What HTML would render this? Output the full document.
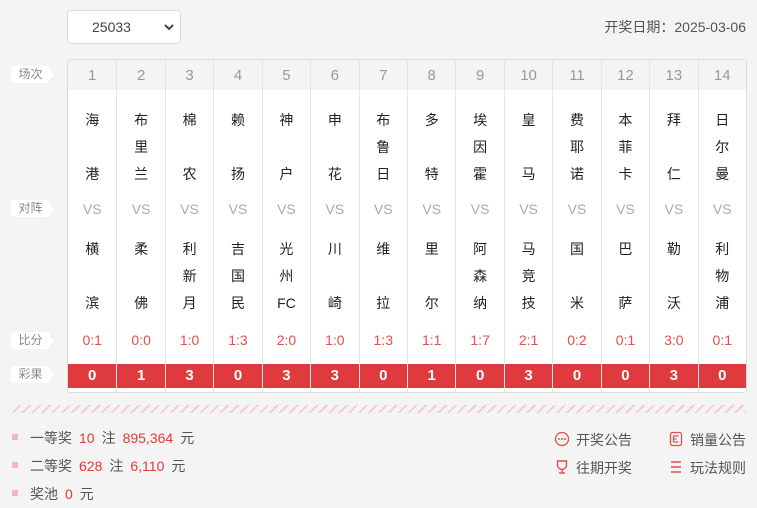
<!DOCTYPE html>
<html><head><meta charset="utf-8"><style>
*{margin:0;padding:0;box-sizing:border-box}
body{width:757px;height:508px;background:#f4f4f4;font-family:"Liberation Sans","Noto Sans CJK SC",sans-serif;position:relative;overflow:hidden;color:#333}
.sel{position:absolute;left:67px;top:10px;width:114px;height:34px;background:#fff;border:1px solid #ddd;border-radius:4px;font-size:14px;color:#444;line-height:32px;padding-left:24px}
.sel svg{position:absolute;right:6px;top:13px}
.date{position:absolute;right:11px;top:17px;font-size:14px;color:#555}
.lab{position:absolute;left:11px;width:39px;height:17px;background:#fff;border-radius:4px;font-size:12px;color:#888;text-align:center;line-height:17px}
.lab:after{content:"";position:absolute;right:-4px;top:5px;border-left:4px solid #fff;border-top:4px solid transparent;border-bottom:4px solid transparent}
.tbl{position:absolute;left:67px;top:59px;width:680px;height:334px;border:1px solid #ddd;border-radius:3px;background:#fff;display:grid;grid-template-columns:repeat(14,1fr);overflow:hidden}
.col{position:relative;border-left:1px solid #e6e6e6;height:100%}
.col:first-child{border-left:none}
.hd{height:30px;background:#f4f4f4;text-align:center;line-height:32px;font-size:15px;color:#999}
.t{position:absolute;left:0;right:0;display:flex;flex-direction:column;justify-content:space-between;align-items:center;font-size:14px;color:#222;line-height:20px}
.h{top:50px;height:74px}
.a{top:179px;height:74px}
.vs{position:absolute;top:141px;width:100%;text-align:center;font-size:14px;color:#aaa}
.sc{position:absolute;top:272px;width:100%;text-align:center;font-size:14px;color:#e05050}
.rs{position:absolute;top:304px;height:24px;width:100%;background:#df3b3e;color:#fff;font-weight:bold;text-align:center;line-height:24px;font-size:15px}
.hatch{position:absolute;left:12px;top:405px;width:734px;height:8px;background:repeating-linear-gradient(135deg,transparent 0 5px,#f6cccc 5px 7px)}
.pr{position:absolute;left:12px;font-size:14px;color:#555}
.pr i{display:inline-block;width:6px;height:6px;background:#f7b8b8;margin-right:12px;vertical-align:middle;position:relative;top:-2px}
.pr b{font-weight:normal;color:#e53935;margin:0 7px}
.lk{position:absolute;font-size:14px;color:#555}
.lk svg{position:absolute;left:-22px;top:1px}
</style></head><body>
<div class="sel">25033<svg width="10" height="7" viewBox="0 0 10 7"><path d="M1 1l4 4 4-4" stroke="#444" stroke-width="2" fill="none"/></svg></div>
<div class="date">开奖日期：2025-03-06</div>
<div class="lab" style="top:66px">场次</div>
<div class="lab" style="top:200px">对阵</div>
<div class="lab" style="top:332px">比分</div>
<div class="lab" style="top:366px">彩果</div>
<div class="tbl">
<div class="col"><div class="hd">1</div><div class="t h"><span>海</span><span>港</span></div><div class="vs">VS</div><div class="t a"><span>横</span><span>滨</span></div><div class="sc">0:1</div><div class="rs">0</div></div>
<div class="col"><div class="hd">2</div><div class="t h"><span>布</span><span>里</span><span>兰</span></div><div class="vs">VS</div><div class="t a"><span>柔</span><span>佛</span></div><div class="sc">0:0</div><div class="rs">1</div></div>
<div class="col"><div class="hd">3</div><div class="t h"><span>棉</span><span>农</span></div><div class="vs">VS</div><div class="t a"><span>利</span><span>新</span><span>月</span></div><div class="sc">1:0</div><div class="rs">3</div></div>
<div class="col"><div class="hd">4</div><div class="t h"><span>赖</span><span>扬</span></div><div class="vs">VS</div><div class="t a"><span>吉</span><span>国</span><span>民</span></div><div class="sc">1:3</div><div class="rs">0</div></div>
<div class="col"><div class="hd">5</div><div class="t h"><span>神</span><span>户</span></div><div class="vs">VS</div><div class="t a"><span>光</span><span>州</span><span>FC</span></div><div class="sc">2:0</div><div class="rs">3</div></div>
<div class="col"><div class="hd">6</div><div class="t h"><span>申</span><span>花</span></div><div class="vs">VS</div><div class="t a"><span>川</span><span>崎</span></div><div class="sc">1:0</div><div class="rs">3</div></div>
<div class="col"><div class="hd">7</div><div class="t h"><span>布</span><span>鲁</span><span>日</span></div><div class="vs">VS</div><div class="t a"><span>维</span><span>拉</span></div><div class="sc">1:3</div><div class="rs">0</div></div>
<div class="col"><div class="hd">8</div><div class="t h"><span>多</span><span>特</span></div><div class="vs">VS</div><div class="t a"><span>里</span><span>尔</span></div><div class="sc">1:1</div><div class="rs">1</div></div>
<div class="col"><div class="hd">9</div><div class="t h"><span>埃</span><span>因</span><span>霍</span></div><div class="vs">VS</div><div class="t a"><span>阿</span><span>森</span><span>纳</span></div><div class="sc">1:7</div><div class="rs">0</div></div>
<div class="col"><div class="hd">10</div><div class="t h"><span>皇</span><span>马</span></div><div class="vs">VS</div><div class="t a"><span>马</span><span>竞</span><span>技</span></div><div class="sc">2:1</div><div class="rs">3</div></div>
<div class="col"><div class="hd">11</div><div class="t h"><span>费</span><span>耶</span><span>诺</span></div><div class="vs">VS</div><div class="t a"><span>国</span><span>米</span></div><div class="sc">0:2</div><div class="rs">0</div></div>
<div class="col"><div class="hd">12</div><div class="t h"><span>本</span><span>菲</span><span>卡</span></div><div class="vs">VS</div><div class="t a"><span>巴</span><span>萨</span></div><div class="sc">0:1</div><div class="rs">0</div></div>
<div class="col"><div class="hd">13</div><div class="t h"><span>拜</span><span>仁</span></div><div class="vs">VS</div><div class="t a"><span>勒</span><span>沃</span></div><div class="sc">3:0</div><div class="rs">3</div></div>
<div class="col"><div class="hd">14</div><div class="t h"><span>日</span><span>尔</span><span>曼</span></div><div class="vs">VS</div><div class="t a"><span>利</span><span>物</span><span>浦</span></div><div class="sc">0:1</div><div class="rs">0</div></div>
</div>
<div class="hatch"></div>
<div class="pr" style="top:428px"><i></i>一等奖<b>10</b>注<b>895,364</b>元</div>
<div class="pr" style="top:456px"><i></i>二等奖<b>628</b>注<b>6,110</b>元</div>
<div class="pr" style="top:484px"><i></i>奖池<b>0</b>元</div>
<div class="lk" style="left:576px;top:430px"><svg width="16" height="16" viewBox="0 0 16 16"><circle cx="8" cy="8" r="6.5" fill="none" stroke="#e05050" stroke-width="1.3"/><circle cx="5" cy="8" r="1" fill="#e05050"/><circle cx="8" cy="8" r="1" fill="#e05050"/><circle cx="11" cy="8" r="1" fill="#e05050"/></svg>开奖公告</div>
<div class="lk" style="left:690px;top:430px"><svg width="16" height="16" viewBox="0 0 16 16"><rect x="2.5" y="1.5" width="11" height="13" rx="2" fill="none" stroke="#e05050" stroke-width="1.3"/><path d="M5.5 5h5M5.5 8h3M5.5 11h5M5.5 5v6" stroke="#e05050" stroke-width="1.2"/></svg>销量公告</div>
<div class="lk" style="left:576px;top:458px"><svg width="16" height="16" viewBox="0 0 16 16"><path d="M3.5 2h9v4a4.5 4.5 0 0 1-9 0z" fill="none" stroke="#e05050" stroke-width="1.4"/><path d="M8 10.5v3M5 14h6" stroke="#e05050" stroke-width="1.4"/></svg>往期开奖</div>
<div class="lk" style="left:690px;top:458px"><svg width="16" height="16" viewBox="0 0 16 16"><path d="M3 3h10M3 8h10M3 13h10" stroke="#e05050" stroke-width="1.4"/></svg>玩法规则</div>
</body></html>
